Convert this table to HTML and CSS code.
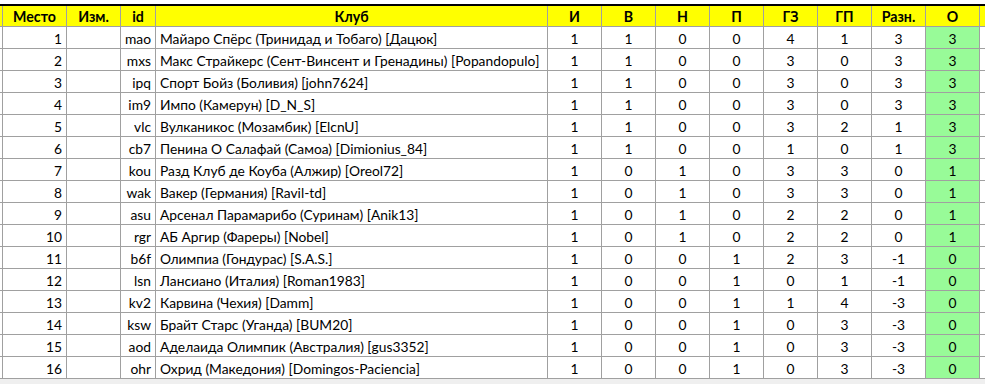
FILE: index.html
```html
<!DOCTYPE html>
<html lang="ru">
<head>
<meta charset="utf-8">
<title>Таблица</title>
<link rel="stylesheet" href="styles.css">
</head>
<body>
<div class="sheet">
  <div class="row head">
    <div class="c"></div><div class="c">Место</div><div class="c">Изм.</div><div class="c">id</div><div class="c">Клуб</div><div class="c">И</div><div class="c">В</div><div class="c">Н</div><div class="c">П</div><div class="c">ГЗ</div><div class="c">ГП</div><div class="c">Разн.</div><div class="c">О</div><div class="c"></div>
  </div>
  <div class="row"><div class="c"></div><div class="c r">1</div><div class="c"></div><div class="c r">mao</div><div class="c l">Майаро Спёрс (Тринидад и Тобаго) [Дацюк]</div><div class="c">1</div><div class="c">1</div><div class="c">0</div><div class="c">0</div><div class="c">4</div><div class="c">1</div><div class="c">3</div><div class="c g">3</div><div class="c"></div></div>
  <div class="row"><div class="c"></div><div class="c r">2</div><div class="c"></div><div class="c r">mxs</div><div class="c l">Макс Страйкерс (Сент-Винсент и Гренадины) [Popandopulo]</div><div class="c">1</div><div class="c">1</div><div class="c">0</div><div class="c">0</div><div class="c">3</div><div class="c">0</div><div class="c">3</div><div class="c g">3</div><div class="c"></div></div>
  <div class="row"><div class="c"></div><div class="c r">3</div><div class="c"></div><div class="c r">ipq</div><div class="c l">Спорт Бойз (Боливия) [john7624]</div><div class="c">1</div><div class="c">1</div><div class="c">0</div><div class="c">0</div><div class="c">3</div><div class="c">0</div><div class="c">3</div><div class="c g">3</div><div class="c"></div></div>
  <div class="row"><div class="c"></div><div class="c r">4</div><div class="c"></div><div class="c r">im9</div><div class="c l">Импо (Камерун) [D_N_S]</div><div class="c">1</div><div class="c">1</div><div class="c">0</div><div class="c">0</div><div class="c">3</div><div class="c">0</div><div class="c">3</div><div class="c g">3</div><div class="c"></div></div>
  <div class="row"><div class="c"></div><div class="c r">5</div><div class="c"></div><div class="c r">vlc</div><div class="c l">Вулканикос (Мозамбик) [ElcnU]</div><div class="c">1</div><div class="c">1</div><div class="c">0</div><div class="c">0</div><div class="c">3</div><div class="c">2</div><div class="c">1</div><div class="c g">3</div><div class="c"></div></div>
  <div class="row"><div class="c"></div><div class="c r">6</div><div class="c"></div><div class="c r">cb7</div><div class="c l">Пенина О Салафай (Самоа) [Dimionius_84]</div><div class="c">1</div><div class="c">1</div><div class="c">0</div><div class="c">0</div><div class="c">1</div><div class="c">0</div><div class="c">1</div><div class="c g">3</div><div class="c"></div></div>
  <div class="row"><div class="c"></div><div class="c r">7</div><div class="c"></div><div class="c r">kou</div><div class="c l">Разд Клуб де Коуба (Алжир) [Oreol72]</div><div class="c">1</div><div class="c">0</div><div class="c">1</div><div class="c">0</div><div class="c">3</div><div class="c">3</div><div class="c">0</div><div class="c g">1</div><div class="c"></div></div>
  <div class="row"><div class="c"></div><div class="c r">8</div><div class="c"></div><div class="c r">wak</div><div class="c l">Вакер (Германия) [Ravil-td]</div><div class="c">1</div><div class="c">0</div><div class="c">1</div><div class="c">0</div><div class="c">3</div><div class="c">3</div><div class="c">0</div><div class="c g">1</div><div class="c"></div></div>
  <div class="row"><div class="c"></div><div class="c r">9</div><div class="c"></div><div class="c r">asu</div><div class="c l">Арсенал Парамарибо (Суринам) [Anik13]</div><div class="c">1</div><div class="c">0</div><div class="c">1</div><div class="c">0</div><div class="c">2</div><div class="c">2</div><div class="c">0</div><div class="c g">1</div><div class="c"></div></div>
  <div class="row"><div class="c"></div><div class="c r">10</div><div class="c"></div><div class="c r">rgr</div><div class="c l">АБ Аргир (Фареры) [Nobel]</div><div class="c">1</div><div class="c">0</div><div class="c">1</div><div class="c">0</div><div class="c">2</div><div class="c">2</div><div class="c">0</div><div class="c g">1</div><div class="c"></div></div>
  <div class="row"><div class="c"></div><div class="c r">11</div><div class="c"></div><div class="c r">b6f</div><div class="c l">Олимпиа (Гондурас) [S.A.S.]</div><div class="c">1</div><div class="c">0</div><div class="c">0</div><div class="c">1</div><div class="c">2</div><div class="c">3</div><div class="c">-1</div><div class="c g">0</div><div class="c"></div></div>
  <div class="row"><div class="c"></div><div class="c r">12</div><div class="c"></div><div class="c r">lsn</div><div class="c l">Лансиано (Италия) [Roman1983]</div><div class="c">1</div><div class="c">0</div><div class="c">0</div><div class="c">1</div><div class="c">0</div><div class="c">1</div><div class="c">-1</div><div class="c g">0</div><div class="c"></div></div>
  <div class="row"><div class="c"></div><div class="c r">13</div><div class="c"></div><div class="c r">kv2</div><div class="c l">Карвина (Чехия) [Damm]</div><div class="c">1</div><div class="c">0</div><div class="c">0</div><div class="c">1</div><div class="c">1</div><div class="c">4</div><div class="c">-3</div><div class="c g">0</div><div class="c"></div></div>
  <div class="row"><div class="c"></div><div class="c r">14</div><div class="c"></div><div class="c r">ksw</div><div class="c l">Брайт Старс (Уганда) [BUM20]</div><div class="c">1</div><div class="c">0</div><div class="c">0</div><div class="c">1</div><div class="c">0</div><div class="c">3</div><div class="c">-3</div><div class="c g">0</div><div class="c"></div></div>
  <div class="row"><div class="c"></div><div class="c r">15</div><div class="c"></div><div class="c r">aod</div><div class="c l">Аделаида Олимпик (Австралия) [gus3352]</div><div class="c">1</div><div class="c">0</div><div class="c">0</div><div class="c">1</div><div class="c">0</div><div class="c">3</div><div class="c">-3</div><div class="c g">0</div><div class="c"></div></div>
  <div class="row"><div class="c"></div><div class="c r">16</div><div class="c"></div><div class="c r">ohr</div><div class="c l">Охрид (Македония) [Domingos-Paciencia]</div><div class="c">1</div><div class="c">0</div><div class="c">0</div><div class="c">1</div><div class="c">0</div><div class="c">3</div><div class="c">-3</div><div class="c g">0</div><div class="c"></div></div>
</div>
<div class="below"></div>
</body>
</html>
```

FILE: styles.css
```css
html, body {
  margin: 0;
  padding: 0;
  background: #ffffff;
  height: 100%;
  overflow: hidden;
}
body {
  font-family: Lato, "Liberation Sans", sans-serif;
  font-size: 13.8px;
  color: #000;
  display: flex;
  flex-direction: column;
}
.sheet {
  margin-top: 4px;
  border-top: 2px solid #000;
}
.row {
  display: grid;
  grid-template-columns: 3px 64px 54px 35px 392px repeat(8, 54px) 1fr;
  height: 22px;
}
.row.head {
  height: 21px;
  background: #ffff00;
  font-weight: bold;
  font-size: 14.2px;
}
.c {
  box-sizing: border-box;
  border-right: 1px solid #a0a0a0;
  border-bottom: 1px solid #a0a0a0;
  display: flex;
  align-items: center;
  justify-content: center;
  padding: 1px 4px 0;
  white-space: nowrap;
  overflow: hidden;
}
.row > .c:first-child {
  padding: 0;
}
.row > .c:last-child {
  border-right: none;
}
.c.r {
  justify-content: flex-end;
}
.c.l {
  justify-content: flex-start;
}
.c.g {
  background: #98fb98;
}
.below {
  flex: 1;
  background: #efefef;
}
```
